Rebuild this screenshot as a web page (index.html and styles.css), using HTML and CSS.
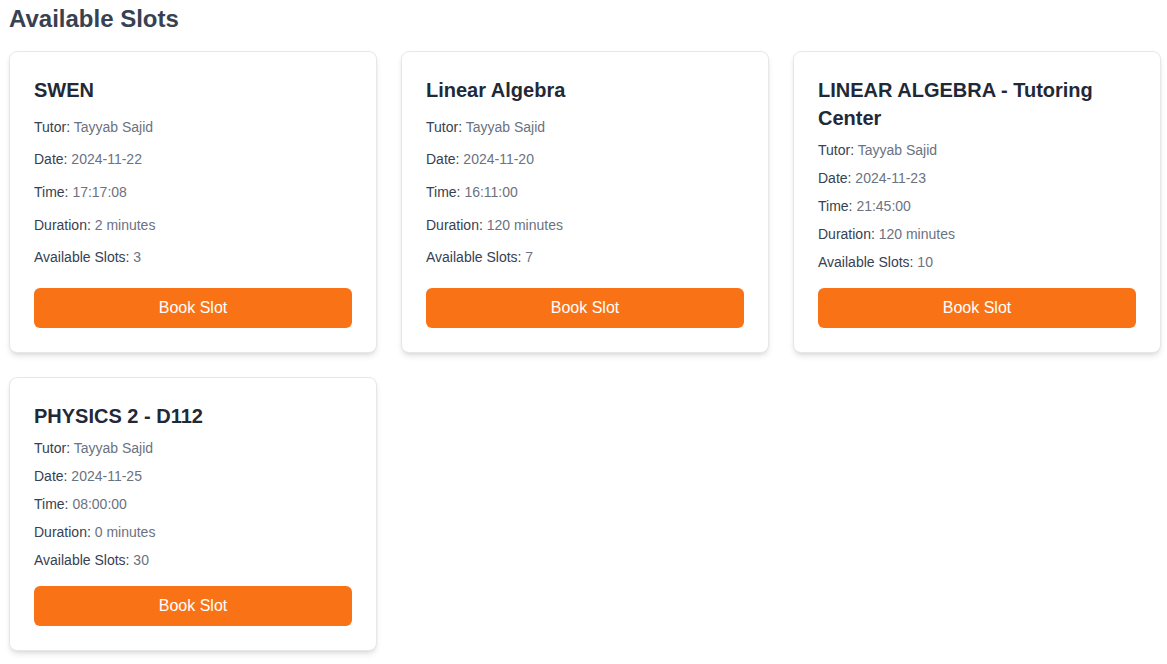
FILE: index.html
```html
<!DOCTYPE html>
<html lang="en">
<head>
<meta charset="utf-8">
<title>Available Slots</title>
<link rel="stylesheet" href="styles.css">
</head>
<body>
<main class="page">
  <h2 class="page-title">Available Slots</h2>
  <div class="grid">
    <div class="card">
      <h3 class="card-title">SWEN</h3>
      <p class="row"><span class="label">Tutor:</span> <span class="value">Tayyab Sajid</span></p>
      <p class="row"><span class="label">Date:</span> <span class="value">2024-11-22</span></p>
      <p class="row"><span class="label">Time:</span> <span class="value">17:17:08</span></p>
      <p class="row"><span class="label">Duration:</span> <span class="value">2 minutes</span></p>
      <p class="row"><span class="label">Available Slots:</span> <span class="value">3</span></p>
      <button class="btn">Book Slot</button>
    </div>
    <div class="card">
      <h3 class="card-title">Linear Algebra</h3>
      <p class="row"><span class="label">Tutor:</span> <span class="value">Tayyab Sajid</span></p>
      <p class="row"><span class="label">Date:</span> <span class="value">2024-11-20</span></p>
      <p class="row"><span class="label">Time:</span> <span class="value">16:11:00</span></p>
      <p class="row"><span class="label">Duration:</span> <span class="value">120 minutes</span></p>
      <p class="row"><span class="label">Available Slots:</span> <span class="value">7</span></p>
      <button class="btn">Book Slot</button>
    </div>
    <div class="card">
      <h3 class="card-title">LINEAR ALGEBRA - Tutoring Center</h3>
      <p class="row"><span class="label">Tutor:</span> <span class="value">Tayyab Sajid</span></p>
      <p class="row"><span class="label">Date:</span> <span class="value">2024-11-23</span></p>
      <p class="row"><span class="label">Time:</span> <span class="value">21:45:00</span></p>
      <p class="row"><span class="label">Duration:</span> <span class="value">120 minutes</span></p>
      <p class="row"><span class="label">Available Slots:</span> <span class="value">10</span></p>
      <button class="btn">Book Slot</button>
    </div>
    <div class="card">
      <h3 class="card-title">PHYSICS 2 - D112</h3>
      <p class="row"><span class="label">Tutor:</span> <span class="value">Tayyab Sajid</span></p>
      <p class="row"><span class="label">Date:</span> <span class="value">2024-11-25</span></p>
      <p class="row"><span class="label">Time:</span> <span class="value">08:00:00</span></p>
      <p class="row"><span class="label">Duration:</span> <span class="value">0 minutes</span></p>
      <p class="row"><span class="label">Available Slots:</span> <span class="value">30</span></p>
      <button class="btn">Book Slot</button>
    </div>
  </div>
</main>
</body>
</html>
```

FILE: styles.css
```css
* { box-sizing: border-box; }
html, body { margin: 0; padding: 0; background: #ffffff; }
body { font-family: "Liberation Sans", Arial, sans-serif; }

.page { padding: 3px 6px 8px 9px; }

.page-title {
  margin: 0 0 16px 0;
  font-size: 24px;
  line-height: 32px;
  font-weight: 700;
  color: #374151;
}

.grid {
  display: grid;
  grid-template-columns: repeat(3, 1fr);
  gap: 24px;
}

.card {
  display: flex;
  flex-direction: column;
  justify-content: space-between;
  background: #ffffff;
  border: 1px solid #e5e7eb;
  border-radius: 8px;
  box-shadow: 0 4px 6px -1px rgba(0,0,0,0.1), 0 2px 4px -2px rgba(0,0,0,0.1);
  padding: 24px;
}

.card-title {
  margin: 0 0 8px 0;
  font-size: 20px;
  line-height: 28px;
  font-weight: 700;
  color: #1f2937;
}

.row {
  margin: 0 0 8px 0;
  font-size: 14px;
  line-height: 20px;
}
.row:nth-last-of-type(1) { margin-bottom: 16px; }

.label { color: #374151; }
.value { color: #6b7280; }

.btn {
  display: block;
  width: 100%;
  height: 40px;
  border: 0;
  border-radius: 6px;
  background: #f97316;
  color: #ffffff;
  font-family: "Liberation Sans", Arial, sans-serif;
  font-size: 16px;
  cursor: pointer;
}
```
